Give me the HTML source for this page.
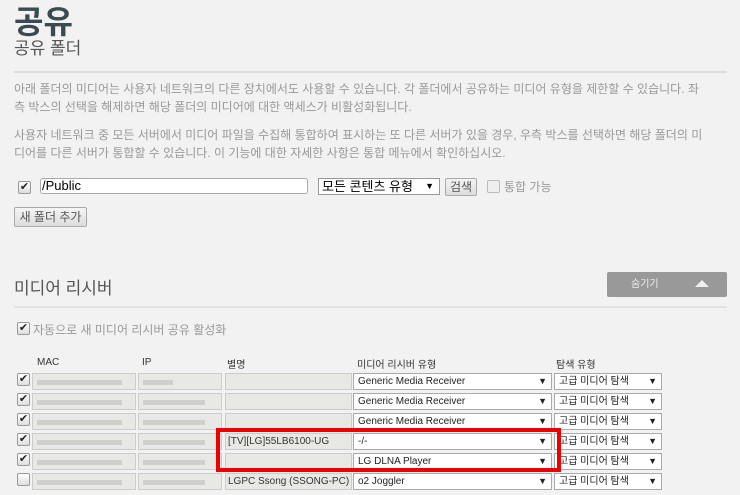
<!DOCTYPE html>
<html><head><meta charset="utf-8"><style>
body{margin:0;width:740px;height:495px;background:#f2f2f2;font-family:"Liberation Sans","Noto Sans CJK KR",sans-serif;position:relative;overflow:hidden}
.a{position:absolute;white-space:nowrap}
.cb{position:absolute;width:11px;height:11px;border:1px solid #999;border-radius:2px;background:linear-gradient(#fff,#ddd);font-size:11px;line-height:11px;text-align:center;color:#222}
.box{position:absolute;height:17px;background:#e8e8e4;border:1px solid #ccc;box-sizing:border-box;font-size:10px;line-height:15px;padding-left:2px;color:#333;white-space:nowrap;overflow:hidden}
.blur{position:absolute;height:5px;top:6px;left:4px;background:#c8c8c8;opacity:.8}
.sel{position:absolute;height:17px;background:#fff;border:1px solid #aaa;box-sizing:border-box;font-size:10px;line-height:15px;padding-left:4px;color:#222;white-space:nowrap}
.sel i{position:absolute;right:4px;top:0;font-style:normal;font-size:9px}
.tx{color:#999;font-size:12px}
</style></head><body>
<div class="a" style="left:14px;top:6px;font-size:32px;line-height:32px;font-weight:bold;color:#3a4a50">공유</div>
<div class="a" style="left:14px;top:40px;font-size:17px;line-height:17px;color:#555">공유 폴더</div>
<div class="a" style="left:14px;top:71px;width:713px;height:2px;background:#ddd"></div>
<div class="a tx" style="left:14px;top:80px;line-height:18px">아래 폴더의 미디어는 사용자 네트워크의 다른 장치에서도 사용할 수 있습니다. 각 폴더에서 공유하는 미디어 유형을 제한할 수 있습니다. 좌<br>측 박스의 선택을 해제하면 해당 폴더의 미디어에 대한 액세스가 비활성화됩니다.</div>
<div class="a tx" style="left:14px;top:126px;line-height:18px">사용자 네트워크 중 모든 서버에서 미디어 파일을 수집해 통합하여 표시하는 또 다른 서버가 있을 경우, 우측 박스를 선택하면 해당 폴더의 미<br>디어를 다른 서버가 통합할 수 있습니다. 이 기능에 대한 자세한 사항은 통합 메뉴에서 확인하십시오.</div>
<div class="cb" style="left:18px;top:181px">✔</div>
<div class="a" style="left:40px;top:178px;width:268px;height:16px;background:#fff;border:1px solid #aaa;border-radius:3px;box-sizing:border-box;font-size:13px;line-height:14px;padding-left:1px">/Public</div>
<div class="a" style="left:318px;top:178px;width:122px;height:17px;background:#fff;border:1px solid #999;box-sizing:border-box;font-size:13px;line-height:15px;padding-left:3px">모든 콘텐츠 유형 <span style="font-size:9px;position:absolute;right:5px">▼</span></div>
<div class="a" style="left:445px;top:178px;width:32px;height:18px;background:linear-gradient(#f4f4f4,#ddd);border:1px solid #aaa;border-radius:2px;box-sizing:border-box;font-size:12px;line-height:16px;text-align:center;color:#555">검색</div>
<div class="cb" style="left:487px;top:180px;background:#eee;border-color:#bbb"></div>
<div class="a tx" style="left:504px;top:178px">통합 가능</div>
<div class="a" style="left:14px;top:207px;width:73px;height:20px;background:linear-gradient(#f4f4f4,#ddd);border:1px solid #aaa;border-radius:2px;box-sizing:border-box;font-size:12px;line-height:18px;text-align:center;color:#555">새 폴더 추가</div>
<div class="a" style="left:14px;top:274px;font-size:17px;color:#555">미디어 리시버</div>
<div class="a" style="left:607px;top:272px;width:120px;height:25px;background:#999;border-radius:2px;font-size:10px;color:#eee;line-height:25px"><span style="position:absolute;left:24px">숨기기</span><span style="position:absolute;left:88px;top:8px;width:0;height:0;border-left:7px solid transparent;border-right:7px solid transparent;border-bottom:7px solid #eee"></span></div>
<div class="a" style="left:14px;top:306px;width:713px;height:2px;background:#e2e2e2"></div>
<div class="cb" style="left:17px;top:322px">✔</div>
<div class="a tx" style="left:33px;top:321px">자동으로 새 미디어 리시버 공유 활성화</div>
<div class="a" style="left:37px;top:357px;font-size:10px;color:#333">MAC</div>
<div class="a" style="left:142px;top:357px;font-size:10px;color:#333">IP</div>
<div class="a" style="left:227px;top:356px;font-size:10px;color:#333">별명</div>
<div class="a" style="left:357px;top:356px;font-size:10px;color:#333">미디어 리시버 유형</div>
<div class="a" style="left:556px;top:356px;font-size:10px;color:#333">탐색 유형</div>

<div id="rows"></div>
<script>
var d=[["✔","","Generic Media Receiver"],["✔","","Generic Media Receiver"],["✔","","Generic Media Receiver"],["✔","[TV][LG]55LB6100-UG","-/-"],["✔","","LG DLNA Player"],["","LGPC Ssong (SSONG-PC)","o2 Joggler"]];
var h="";
d.forEach(function(r,i){var y=373+i*20;
h+='<div class="cb" style="left:17px;top:'+y+'px">'+r[0]+'</div>';
h+='<div class="box" style="left:32px;top:'+y+'px;width:104px"><div class="blur" style="width:85px"></div></div>';
h+='<div class="box" style="left:138px;top:'+y+'px;width:84px"><div class="blur" style="width:'+(i==0?30:62)+'px"></div></div>';
h+='<div class="box" style="left:225px;top:'+y+'px;width:127px">'+r[1]+'</div>';
h+='<div class="sel" style="left:353px;top:'+y+'px;width:199px">'+r[2]+'<i>▼</i></div>';
h+='<div class="sel" style="left:554px;top:'+y+'px;width:108px">고급 미디어 탐색<i>▼</i></div>';});
document.getElementById("rows").innerHTML=h;
</script>
<div class="a" style="left:216px;top:428px;width:337px;height:36px;border:4px solid #e00"></div>
</body></html>
